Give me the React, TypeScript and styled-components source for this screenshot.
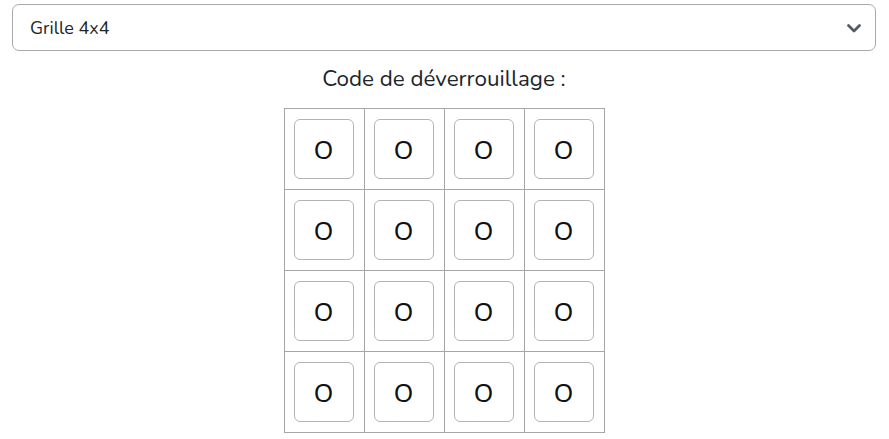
import React from "react";
import styled, { createGlobalStyle } from "styled-components";

const GlobalStyle = createGlobalStyle`
  html, body { margin: 0; padding: 0; background: #fff; }
  body { font-family: "Nunito", "Noto Sans", "Open Sans", sans-serif; color: #212529; }
`;

const Page = styled.div`
  padding: 4px 13px 0 12px;
  display: flex;
  flex-direction: column;
  align-items: center;
`;

const SelectBox = styled.div`
  box-sizing: border-box;
  width: 100%;
  height: 47px;
  border: 1px solid #a9a9a9;
  border-radius: 7px;
  display: flex;
  align-items: center;
  justify-content: space-between;
  padding: 0 13px 0 17px;
  font-size: 18px;
  color: #212529;
`;

const Title = styled.div`
  margin-top: 14px;
  font-size: 22.4px;
  line-height: 28px;
  color: #212529;
`;

const Grid = styled.table`
  margin-top: 15px;
  border-collapse: collapse;
  border: 1px solid #a6a6a6;
`;

const Cell = styled.td`
  border: 1px solid #a6a6a6;
  padding: 10px 10px 10px 9px;
  width: 60px;
  height: 59.75px;
`;

const Key = styled.button`
  box-sizing: border-box;
  width: 60px;
  height: 60px;
  border: 1px solid #b3b3b3;
  border-radius: 6px;
  background: #fff;
  font-family: "Noto Sans", "Open Sans", sans-serif;
  font-size: 25px;
  color: #111;
  display: flex;
  align-items: center;
  justify-content: center;
  padding: 0;
`;

const Chevron = () => (
  <svg width="16" height="12" viewBox="0 0 16 12">
    <path d="M2.5 3.5l5.5 5.5 5.5-5.5" fill="none" stroke="#555b62" strokeWidth="2.8" strokeLinecap="round" strokeLinejoin="round" />
  </svg>
);

export default function App() {
  const rows = [0, 1, 2, 3];
  return (
    <>
      <GlobalStyle />
      <Page>
        <SelectBox>
          <span>Grille 4x4</span>
          <Chevron />
        </SelectBox>
        <Title>Code de déverrouillage :</Title>
        <Grid>
          <tbody>
            {rows.map((r) => (
              <tr key={r}>
                {rows.map((c) => (
                  <Cell key={c}>
                    <Key>O</Key>
                  </Cell>
                ))}
              </tr>
            ))}
          </tbody>
        </Grid>
      </Page>
    </>
  );
}
